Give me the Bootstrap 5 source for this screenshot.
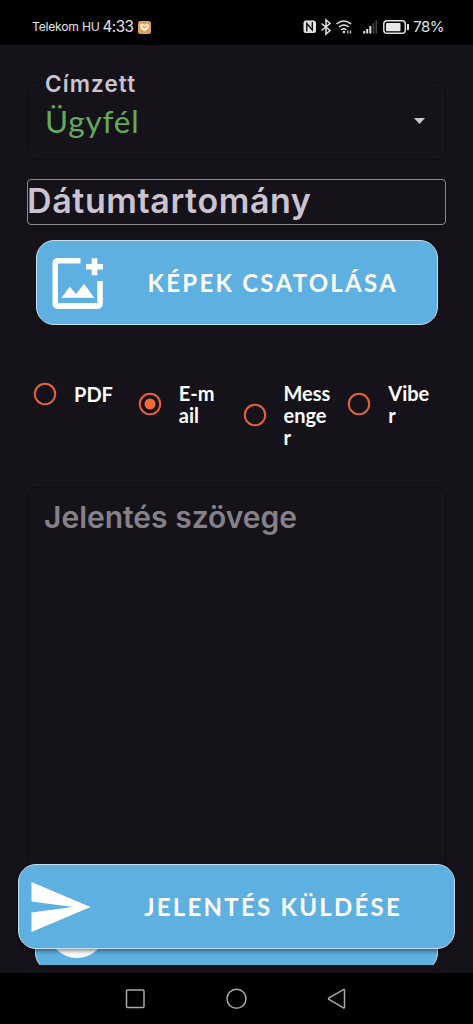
<!DOCTYPE html>
<html lang="hu">
<head>
<meta charset="utf-8">
<meta name="viewport" content="width=device-width, initial-scale=1">
<title>Jelentés küldése</title>
<link href="https://cdn.jsdelivr.net/npm/bootstrap@5.3.0/dist/css/bootstrap.min.css" rel="stylesheet">
<style>
body{background:#15121a;font-family:Lato,"Open Sans",sans-serif;color:#fff;height:1024px}
.status-bar{height:45px;background:#000;padding:18px 29px 0 32px;color:#e4e4e4;font-family:Inter,sans-serif;line-height:18px}
.carrier{font-size:12.2px;letter-spacing:-.25px;margin-right:3px}
.clock{font-size:15.2px;letter-spacing:-.5px}
.battery-text{font-size:15px;letter-spacing:-.5px}
.app-view{height:920px;overflow:hidden;padding:37px 27px 0}
.outline-box{border:1px solid #0e0c12;border-radius:10px}
.recipient{height:78px;padding:0 20px 0 17px}
.recipient-label{top:-16px;left:11px;padding:0 7px 0 6px;background:#15121a;color:#cbc4d0;font-family:Inter,sans-serif;font-size:22.5px;font-weight:600;line-height:34px;letter-spacing:1.1px}
.recipient-value{color:#62ab58;font-size:31.5px;line-height:40px;letter-spacing:.8px}
.date-range{height:46px;margin-top:19px;border:1px solid #8d8892;border-radius:4px;color:#cbc4d0;font-family:Inter,sans-serif;font-size:34px;font-weight:600;line-height:42px;letter-spacing:.6px;text-indent:-1px}
.action{background:#5db0df;border:1.5px solid #c5dfec;border-radius:18px;height:85px;color:#fff;font-size:24px;font-weight:700}
.action span{letter-spacing:2.25px;line-height:32px}
.attach{width:402px;margin:15px 8px 0 9px;padding:0 39px 0 9px}
.channels{margin-top:57px;height:105px;font-size:20px;font-weight:700;line-height:22px}
.channel{width:105px;padding-left:6px}
.channel svg{margin-right:17px}
.message-box{height:390px;padding:11px 17px 0 16px;color:#858189;font-family:Inter,sans-serif;font-size:30px;font-weight:600;line-height:36px}
.hidden-action{margin:9px 8px 0;padding-left:12px}
.send{left:18px;top:864px;width:437px;padding:0 52px 0 6px;box-shadow:0 2px 4px #0007}
.nav-bar{height:51px;background:#000;margin-top:8px}
</style>
</head>
<body class="overflow-hidden">
<header class="status-bar d-flex justify-content-between align-items-start">
  <div class="d-flex align-items-center">
    <span class="carrier">Telekom HU</span><span class="clock">4:33</span>
    <svg class="ms-1" width="15" height="15" viewBox="0 0 15 15"><rect x="1" y="1" width="13" height="13" rx="2.5" fill="#dda05c"/><path d="M7.500 11.500C4 9.500 3 7.500 3 5.700 3 3.500 6 3 7.500 5 9 3 12 3.500 12 5.700 12 7.500 11 9.500 7.500 11.500Z" fill="#fff0dc"/><path d="M5.300 6l2.200 2 2.300-2" fill="none" stroke="#dda05c" stroke-width="1.200"/></svg>
  </div>
  <div class="d-flex align-items-center">
    <svg width="110" height="18" viewBox="304 18 110 18" fill="none" stroke="#e2e2e2">
      <rect x="304.500" y="20.500" width="12.500" height="12.500" rx="2.500" fill="#e2e2e2" stroke="none"/>
      <path d="M307.800 31.500V23.500l5.500 6.500V22" stroke="#000" stroke-width="1.300"/>
      <path d="M322.500 23.500l8.500 7-4 3.500V20l4 3.500-8.500 7" stroke-width="1.500"/>
      <path d="M337.500 24q7.300-6 14.600 0M340 27q5-4 9.800 0M342.300 29.800q2.500-2 5 0" stroke-width="1.500"/>
      <circle cx="344.900" cy="32" r="1.300" fill="#e2e2e2" stroke="none"/><path d="M348.800 30.500v3M351.500 30.500v3" stroke-width="1.200"/>
      <path d="M365.200 31v2.500M368.200 29v4.500M371.300 26v7.500" stroke-width="2"/><path d="M374.500 23v10.500M377.300 20.500v13" stroke="#444" stroke-width="1.700"/>
      <rect x="384.800" y="20.800" width="21.500" height="12.500" rx="3.300" stroke-width="1.500"/><rect x="387" y="23" width="14.500" height="8.200" rx="1" fill="#e8e8e8" stroke="none"/>
      <path d="M409 24v6" stroke-width="2"/>
    </svg>
    <span class="battery-text">78%</span>
  </div>
</header>

<main class="app-view">
  <div class="outline-box recipient position-relative d-flex align-items-center justify-content-between">
    <label class="recipient-label position-absolute">Címzett</label>
    <span class="recipient-value">Ügyfél</span>
    <svg width="11" height="6" viewBox="0 0 11 6"><path d="M0 0h11L5.500 6Z" fill="#ccc5d0"/></svg>
  </div>
  <div class="date-range text-nowrap">Dátumtartomány</div>
  <button type="button" class="action attach d-flex align-items-center justify-content-between">
    <svg width="62" height="62" viewBox="46 251 62 62" fill="#fff"><path d="M80.500 257H57.500a5 5 0 0 0-5 5v41a5 5 0 0 0 5 5h40.300a5 5 0 0 0 5-5v-23H97.300v22H58v-39.500h22.500Z"/><path d="M91.700 257.300h5.600v5.700h5.700v5.500h-5.700v5.800h-5.600v-5.800H86V263h5.700zM61.500 296.700h32.800L84 282.800l-8 10.200-6.300-7.300z"/></svg>
    <span>KÉPEK CSATOLÁSA</span>
  </button>
  <div class="channels d-flex align-items-start">
    <label class="channel d-flex align-items-center"><svg width="24" height="24" viewBox="0 0 24 24" fill="none" stroke="#e0633c" stroke-width="2"><circle cx="12" cy="12" r="10.200"/></svg><span>PDF</span></label>
    <label class="channel d-flex align-items-center"><svg width="24" height="24" viewBox="0 0 24 24" fill="none" stroke="#e0633c" stroke-width="2"><circle cx="12" cy="12" r="10.200"/><circle cx="12" cy="12" r="5.500" fill="#f4673b" stroke="none"/></svg><span>E-m<br>ail</span></label>
    <label class="channel d-flex align-items-center"><svg width="24" height="24" viewBox="0 0 24 24" fill="none" stroke="#e0633c" stroke-width="2"><circle cx="12" cy="12" r="10.200"/></svg><span>Mess<br>enge<br>r</span></label>
    <label class="channel d-flex align-items-center"><svg width="24" height="24" viewBox="0 0 24 24" fill="none" stroke="#e0633c" stroke-width="2"><circle cx="12" cy="12" r="10.200"/></svg><span>Vibe<br>r</span></label>
  </div>
  <div class="outline-box message-box">Jelentés szövege</div>
  <div class="action hidden-action d-flex align-items-center">
    <svg width="60" height="60" viewBox="0 0 60 60"><circle cx="29" cy="30" r="29" fill="#fff"/></svg>
  </div>
</main>
<button type="button" class="action send position-absolute d-flex align-items-center justify-content-between">
  <svg width="72" height="60" viewBox="0 0 72 60" fill="#fff"><path d="M6.500 5v19.500L48 30 6.500 35.500V55L65.500 30Z"/></svg>
  <span>JELENTÉS KÜLDÉSE</span>
</button>
<nav class="nav-bar d-flex justify-content-center align-items-center">
  <svg width="240" height="24" viewBox="117 987 240 24" fill="none" stroke="#aaa" stroke-width="1.500"><rect x="126.500" y="990" width="17.500" height="17.500" rx="1"/><circle cx="236.500" cy="998.700" r="9.500"/><path d="M344.500 990.300v17q0 1-1 .5l-14.500-8.300q-1-.8 0-1.600l14.500-8.300q1-.3 1 .7Z"/></svg>
</nav>
<script src="https://cdn.jsdelivr.net/npm/bootstrap@5.3.0/dist/js/bootstrap.bundle.min.js"></script>
</body>
</html>
